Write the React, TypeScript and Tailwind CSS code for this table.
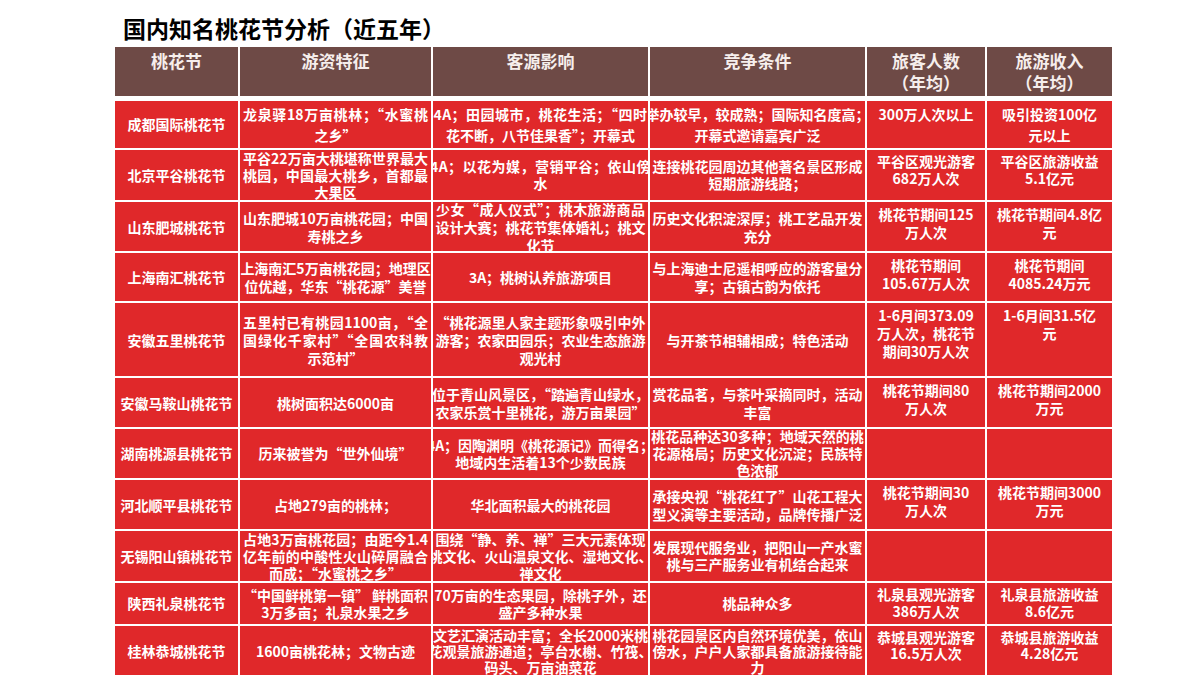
import React from 'react';

type Line = string | { t: string; cls: string };
type Row = { name: string; c: Line[][]; lh: string };

const rows: Row[] = [
  {
    name: '成都国际桃花节',
    lh: 'leading-[21px]',
    c: [
      ['龙泉驿18万亩桃林；“水蜜桃', '之乡”'],
      [{ t: '4A；田园城市，桃花生活；“四时', cls: 'tracking-[0.5px]' }, '花不断，八节佳果香”；开幕式'],
      ['举办较早，较成熟；国际知名度高；', '开幕式邀请嘉宾广泛'],
      ['300万人次以上'],
      ['吸引投资100亿', '元以上'],
    ],
  },
  {
    name: '北京平谷桃花节',
    lh: 'leading-[17px]',
    c: [
      ['平谷22万亩大桃堪称世界最大', '桃园，中国最大桃乡，首都最', '大果区'],
      [{ t: '4A；以花为媒，营销平谷；依山傍', cls: 'tracking-[0.5px]' }, '水'],
      ['连接桃花园周边其他著名景区形成', '短期旅游线路；'],
      ['平谷区观光游客', '682万人次'],
      ['平谷区旅游收益', '5.1亿元'],
    ],
  },
  {
    name: '山东肥城桃花节',
    lh: 'leading-[18px]',
    c: [
      ['山东肥城10万亩桃花园；中国', '寿桃之乡'],
      ['少女“成人仪式”；桃木旅游商品', '设计大赛；桃花节集体婚礼；桃文', '化节'],
      ['历史文化积淀深厚；桃工艺品开发', '充分'],
      ['桃花节期间125', '万人次'],
      ['桃花节期间4.8亿', '元'],
    ],
  },
  {
    name: '上海南汇桃花节',
    lh: 'leading-[18px]',
    c: [
      ['上海南汇5万亩桃花园；地理区', '位优越，华东“桃花源”美誉'],
      ['3A；桃树认养旅游项目'],
      ['与上海迪士尼遥相呼应的游客量分', '享；古镇古韵为依托'],
      ['桃花节期间', '105.67万人次'],
      ['桃花节期间', '4085.24万元'],
    ],
  },
  {
    name: '安徽五里桃花节',
    lh: 'leading-[18px]',
    c: [
      ['五里村已有桃园1100亩，“全', '国绿化千家村”“全国农科教', '示范村”'],
      ['“桃花源里人家主题形象吸引中外', '游客；农家田园乐；农业生态旅游', '观光村'],
      ['与开茶节相辅相成；特色活动'],
      ['1-6月间373.09', '万人次，桃花节', '期间30万人次'],
      ['1-6月间31.5亿', '元'],
    ],
  },
  {
    name: '安徽马鞍山桃花节',
    lh: 'leading-[18px]',
    c: [
      ['桃树面积达6000亩'],
      ['位于青山风景区，“踏遍青山绿水，', '农家乐赏十里桃花，游万亩果园”'],
      ['赏花品茗，与茶叶采摘同时，活动', '丰富'],
      ['桃花节期间80', '万人次'],
      ['桃花节期间2000', '万元'],
    ],
  },
  {
    name: '湖南桃源县桃花节',
    lh: 'leading-[17px]',
    c: [
      ['历来被誉为“世外仙境”'],
      ['4A；因陶渊明《桃花源记》而得名；', '地域内生活着13个少数民族'],
      ['桃花品种达30多种；地域天然的桃', '花源格局；历史文化沉淀；民族特', '色浓郁'],
      [],
      [],
    ],
  },
  {
    name: '河北顺平县桃花节',
    lh: 'leading-[18px]',
    c: [
      ['占地279亩的桃林；'],
      ['华北面积最大的桃花园'],
      ['承接央视“桃花红了”山花工程大', '型义演等主要活动，品牌传播广泛'],
      ['桃花节期间30', '万人次'],
      ['桃花节期间3000', '万元'],
    ],
  },
  {
    name: '无锡阳山镇桃花节',
    lh: 'leading-[17px]',
    c: [
      ['占地3万亩桃花园；由距今1.4', '亿年前的中酸性火山碎屑融合', '而成；“水蜜桃之乡”'],
      ['围绕“静、养、禅”三大元素体现', '桃文化、火山温泉文化、湿地文化、', '禅文化'],
      ['发展现代服务业，把阳山一产水蜜', '桃与三产服务业有机结合起来'],
      [],
      [],
    ],
  },
  {
    name: '陕西礼泉桃花节',
    lh: 'leading-[17px]',
    c: [
      ['“中国鲜桃第一镇” 鲜桃面积', '3万多亩；礼泉水果之乡'],
      ['70万亩的生态果园，除桃子外，还', '盛产多种水果'],
      ['桃品种众多'],
      ['礼泉县观光游客', '386万人次'],
      ['礼泉县旅游收益', '8.6亿元'],
    ],
  },
  {
    name: '桂林恭城桃花节',
    lh: 'leading-[16px]',
    c: [
      ['1600亩桃花林；文物古迹'],
      ['文艺汇演活动丰富；全长2000米桃', '花观景旅游通道；亭台水榭、竹筏、', '码头、万亩油菜花'],
      ['桃花园景区内自然环境优美，依山', '傍水，户户人家都具备旅游接待能', '力'],
      ['恭城县观光游客', '16.5万人次'],
      ['恭城县旅游收益', '4.28亿元'],
    ],
  },
];

function Cell({ lines, top, justify, lh }: { lines: Line[]; top: boolean; justify: boolean; lh: string }) {
  return (
    <div
      className={`flex flex-col overflow-hidden bg-[#e0282a] px-[3px] ${lh} ${
        top ? 'justify-start pt-[3px]' : 'justify-center'
      }`}
    >
      {lines.map((l, i) => {
        const text = typeof l === 'string' ? l : l.t;
        const extra = typeof l === 'string' ? '' : l.cls;
        const j = justify && lines.length > 1 && i < lines.length - 1;
        return (
          <div key={i} className="flex justify-center">
            <span
              className={`block w-max min-w-full shrink-0 ${extra} ${
                j ? 'text-justify [text-align-last:justify]' : 'text-center'
              }`}
            >
              {text}
            </span>
          </div>
        );
      })}
    </div>
  );
}

export default function App() {
  const headers: string[][] = [
    ['桃花节'],
    ['游资特征'],
    ['客源影响'],
    ['竞争条件'],
    ['旅客人数', '（年均）'],
    ['旅游收入', '（年均）'],
  ];
  return (
    <div className="w-[1200px] h-[675px] overflow-hidden bg-white font-['Noto_Sans_CJK_SC','Noto_Sans',sans-serif]">
      <div className="pl-[115px] pt-[13px]">
        <h1 className="pl-[8px] text-[23px] leading-[30px] font-bold text-black">国内知名桃花节分析（近五年）</h1>
        <div className="mt-[4px] w-[997px]">
          <div className="grid h-[49px] grid-cols-[123px_191px_215px_215px_118px_125px] gap-x-[2px]">
            {headers.map((h, i) => (
              <div
                key={i}
                className="flex flex-col items-center bg-[#6e4a46] pt-[3px] text-[17px] leading-[22px] font-bold text-[#f6eeec]"
              >
                {h.map((t, k) => (
                  <div key={k}>{t}</div>
                ))}
              </div>
            ))}
          </div>
          <div className="mt-[5px] grid grid-cols-[123px_191px_215px_215px_118px_125px] grid-rows-[47px_50px_49px_48px_73px_49px_49px_49px_50px_41px_49px] gap-[2px] text-[14px] font-bold text-white">
            {rows.map((r, ri) => (
              <React.Fragment key={ri}>
                <div className={`flex items-center justify-center overflow-hidden whitespace-nowrap bg-[#e0282a] ${r.lh}`}>
                  {r.name}
                </div>
                {r.c.map((lines, ci) => (
                  <Cell key={ci} lines={lines} top={ci >= 3} justify={ci < 3} lh={r.lh} />
                ))}
              </React.Fragment>
            ))}
          </div>
        </div>
      </div>
    </div>
  );
}
